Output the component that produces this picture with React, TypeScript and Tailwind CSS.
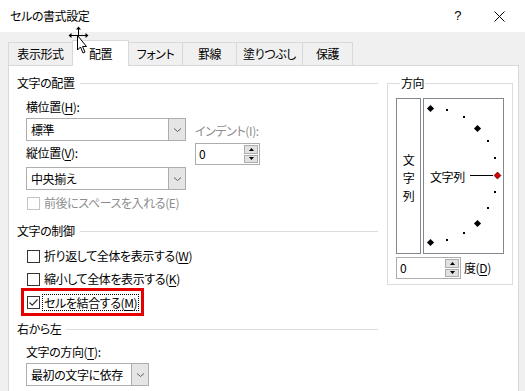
import React from "react";

const F = "font-['Noto_Sans_CJK_JP',sans-serif] [font-feature-settings:'palt'] tracking-[-0.4px]";

function Check({ checked, disabled }: { checked?: boolean; disabled?: boolean }) {
  return (
    <span
      className={`w-[13px] h-[13px] border ${disabled ? "border-[#c4c4c4]" : "border-[#333333]"} bg-white flex items-center justify-center shrink-0`}
    >
      {checked && (
        <svg width="11" height="11" viewBox="0 0 11 11">
          <path d="M1.5 5.5 L4.2 8.2 L9.5 2.5" stroke="#333" strokeWidth="1.2" fill="none" />
        </svg>
      )}
    </span>
  );
}

function Chevron() {
  return (
    <svg width="9" height="6" viewBox="0 0 9 6">
      <path d="M1 1.5 L4.5 4.5 L8 1.5" stroke="#606060" strokeWidth="1" fill="none" />
    </svg>
  );
}

function Combo({ text, w }: { text: string; w: string }) {
  return (
    <div className={`${w} h-[23px] border border-[#adadad] bg-white flex`}>
      <span className="flex-1 pl-[4px] flex items-center text-[12px] leading-[16px]">{text}</span>
      <span className="w-[17px] border-l border-[#adadad] bg-[#e5e5e5] flex items-center justify-center">
        <Chevron />
      </span>
    </div>
  );
}

function Spin({ w }: { w: string }) {
  return (
    <div className={`${w} h-[22px] border border-[#adadad] bg-white flex`}>
      <span className="flex-1 pl-[3px] flex items-center text-[12px] leading-[16px]">0</span>
      <span className="w-[16px] flex flex-col p-px gap-px">
        <span className="flex-1 bg-[#e1e1e1] border border-[#adadad] flex items-center justify-center">
          <svg width="5" height="3" viewBox="0 0 5 3">
            <path d="M0 3 L2.5 0 L5 3 Z" fill="#000" />
          </svg>
        </span>
        <span className="flex-1 bg-[#e1e1e1] border border-[#adadad] flex items-center justify-center">
          <svg width="5" height="3" viewBox="0 0 5 3">
            <path d="M0 0 L2.5 3 L5 0 Z" fill="#000" />
          </svg>
        </span>
      </span>
    </div>
  );
}

function Header({ text, mt }: { text: string; mt: string }) {
  return (
    <div className={`${mt} h-[16px] flex items-center text-[12px] leading-[16px]`}>
      <span>{text}</span>
      <span className="flex-1 h-px bg-[#dcdcdc] ml-[5px]" />
    </div>
  );
}

function CheckRow({ label, u, mt, disabled }: { label: string; u: string; mt: string; disabled?: boolean }) {
  return (
    <div className={`${mt} ml-[10px] h-[16px] flex items-center gap-[4px] text-[12px] leading-[16px] ${disabled ? "text-[#8d8d8d]" : "text-black"}`}>
      <Check disabled={disabled} />
      {disabled ? (
        <span>
          {label}({u})
        </span>
      ) : (
        <span>
          {label}(<u className="underline-offset-2">{u}</u>)
        </span>
      )}
    </div>
  );
}

function Orientation() {
  const big = [
    [6, 9.3],
    [53.3, 29.3],
    [53.3, 123.7],
    [6, 143.3],
  ];
  const small = [
    [23, 11],
    [40, 17.7],
    [63.7, 41.7],
    [71, 58.7],
    [71, 93],
    [63.7, 109.3],
    [40, 133.7],
    [23.3, 141],
  ];
  const d = (cx: number, cy: number, r: number) =>
    `${cx},${cy - r} ${cx + r},${cy} ${cx},${cy + r} ${cx - r},${cy}`;
  return (
    <svg className="absolute inset-0" width="79" height="154" viewBox="0 0 79 154">
      {big.map(([x, y], i) => (
        <polygon key={i} points={d(Math.round(x) + 0.5, Math.round(y) + 0.5, 3.6)} fill="#000" />
      ))}
      {small.map(([x, y], i) => (
        <rect key={i} x={Math.round(x) - 1} y={Math.round(y) - 1} width="2" height="2" fill="#000" />
      ))}
      <line x1="46" y1="76.5" x2="69" y2="76.5" stroke="#000" strokeWidth="1" />
      <polygon points={d(73.5, 76.5, 3.4)} fill="#e00000" stroke="#400000" strokeWidth="0.8" />
    </svg>
  );
}

export default function App() {
  const tabs = [
    { t: "表示形式", w: "w-[65px]" },
    { t: "配置", w: "w-[57px]", sel: true },
    { t: "フォント", w: "w-[55px]" },
    { t: "罫線", w: "w-[55px]" },
    { t: "塗りつぶし", w: "w-[67px]" },
    { t: "保護", w: "w-[51px]" },
  ];
  return (
    <div className={`${F} relative w-[525px] h-[391px] overflow-hidden bg-[#f0f0f0] text-black`}>
      {/* title bar */}
      <div className="h-[32px] bg-white flex items-center pl-[10px]">
        <span className="text-[12px] leading-[16px] flex-1">セルの書式設定</span>
        <span className="text-[13px] leading-[16px] font-['Liberation_Sans',sans-serif] mr-[33px]">?</span>
        <svg width="11" height="11" viewBox="0 0 11 11" className="mr-[20px]">
          <path d="M0.5 0.5 L10.5 10.5 M10.5 0.5 L0.5 10.5" stroke="#000" strokeWidth="1" />
        </svg>
      </div>

      <div className="pt-[8px] pl-[8px] pr-[6px]">
        {/* tabs */}
        <div className="h-[25px] flex items-end">
          {tabs.map((tb, i) =>
            tb.sel ? (
              <div
                key={i}
                className={`${tb.w} -ml-px h-[26px] -mb-px relative z-10 bg-white border border-b-0 border-[#d9d9d9] flex items-center justify-center text-[12px] leading-[16px]`}
              >
                {tb.t}
              </div>
            ) : (
              <div
                key={i}
                className={`${tb.w} ${i === 0 ? "" : "-ml-px"} h-[23px] bg-[#f0f0f0] border border-b-0 border-[#d9d9d9] flex items-center justify-center text-[12px] leading-[16px]`}
              >
                {tb.t}
              </div>
            )
          )}
        </div>

        {/* panel */}
        <div className="w-[511px] h-[400px] bg-white border border-[#d9d9d9] pt-[9px] pl-[8px] flex items-start">
          {/* left column */}
          <div className="w-[361px] flex flex-col">
            <Header text="文字の配置" mt="mt-0" />
            <div className="ml-[9px] flex items-start">
              <div className="w-[160px] flex flex-col">
                <div className="mt-[8px] h-[16px] text-[12px] leading-[16px]">
                  横位置(<u className="underline-offset-2">H</u>):
                </div>
                <div className="mt-[3px]">
                  <Combo text="標準" w="w-[160px]" />
                </div>
                <div className="mt-[4px] h-[16px] text-[12px] leading-[16px]">
                  縦位置(<u className="underline-offset-2">V</u>):
                </div>
                <div className="mt-[6px]">
                  <Combo text="中央揃え" w="w-[160px]" />
                </div>
              </div>
              <div className="ml-[9px] flex flex-col">
                <div className="mt-[32px] h-[16px] text-[12px] leading-[16px] text-[#8d8d8d]">インデント(I):</div>
                <div className="mt-[4px]">
                  <Spin w="w-[65px]" />
                </div>
              </div>
            </div>
            <CheckRow label="前後にスペースを入れる" u="E" mt="mt-[5px]" disabled />
            <Header text="文字の制御" mt="mt-[12px]" />
            <CheckRow label="折り返して全体を表示する" u="W" mt="mt-[9px]" />
            <CheckRow label="縮小して全体を表示する" u="K" mt="mt-[7px]" />
            <div className="mt-[1px] ml-[4px] w-fit border-[3px] border-[#e60000] pl-[3px] pr-[2px] py-[3px]">
              <div className="h-[16px] flex items-center text-[12px] leading-[16px]">
                <Check checked />
                <span className="ml-[2px] px-[1px] border border-dotted border-black leading-[15px]">
                  セルを結合する(<u className="underline-offset-2">M</u>)
                </span>
              </div>
            </div>
            <Header text="右から左" mt="mt-[5px]" />
            <div className="ml-[9px] mt-[7px] h-[16px] text-[12px] leading-[16px]">
              文字の方向(<u className="underline-offset-2">T</u>):
            </div>
            <div className="ml-[9px] mt-[3px]">
              <Combo text="最初の文字に依存" w="w-[123px]" />
            </div>
          </div>

          {/* right column: orientation */}
          <fieldset className="ml-[9px] w-[124px] border border-[#dcdcdc] px-[8px] pb-[5px]">
            <legend className="ml-[4px] px-[1px] text-[12px] leading-[16px]">方向</legend>
            <div className="mt-[7px] flex gap-[2px]">
              <div className="w-[25px] h-[156px] border border-[#828790] flex flex-col items-center justify-center text-[12px] leading-[18px] pt-[4px]">
                <span>文</span>
                <span>字</span>
                <span>列</span>
              </div>
              <div className="relative w-[81px] h-[156px] border border-[#828790] flex items-center">
                <Orientation />
                <span className="relative ml-[6px] mt-[2px] text-[12px] leading-[16px]">文字列</span>
              </div>
            </div>
            <div className="mt-[3px] flex items-center">
              <Spin w="w-[65px]" />
              <span className="ml-[3px] text-[12px] leading-[16px]">
                度(<u className="underline-offset-2">D</u>)
              </span>
            </div>
          </fieldset>
        </div>
      </div>

      {/* mouse cursor overlay */}
      <svg className="absolute z-20 left-[68px] top-[26px]" width="24" height="30" viewBox="0 0 24 30">
        <g stroke="#000" strokeWidth="1" fill="none">
          <path d="M2 9.5 H18 M10.5 2 V16" />
        </g>
        <path d="M10.5 0.5 L8 3.5 H13 Z M0.5 9.5 L3.5 7 V12 Z M20.5 9.5 L17.5 7 V12 Z" fill="#000" />
        <path d="M9.5 9.5 V24 L12.5 21 L15 27 L17 26 L14.5 20.5 L18.5 20.5 Z" fill="#fff" stroke="#000" strokeWidth="1" strokeLinejoin="miter" />
      </svg>
    </div>
  );
}
